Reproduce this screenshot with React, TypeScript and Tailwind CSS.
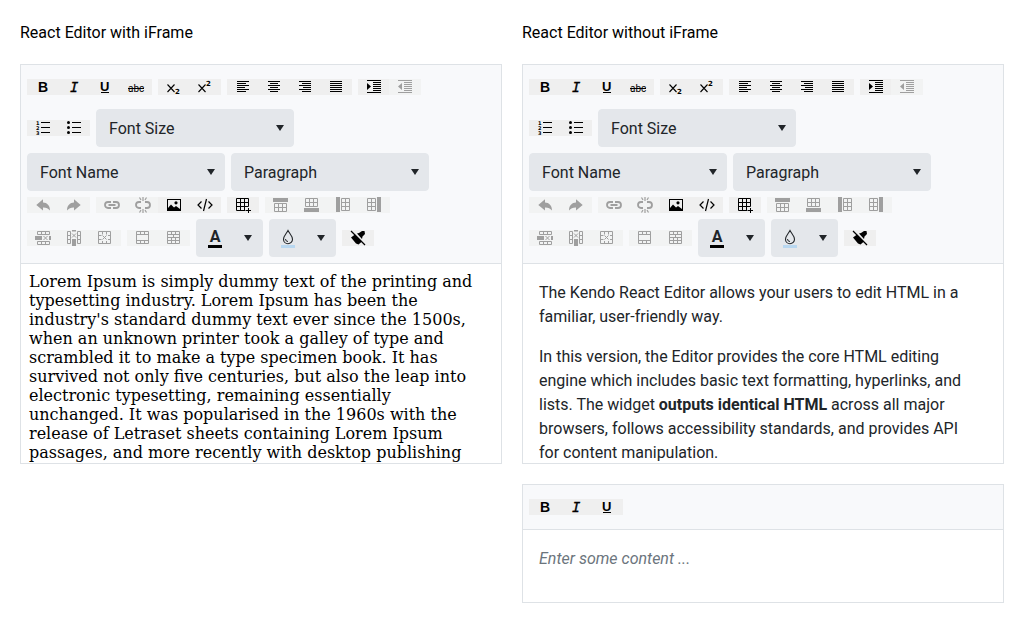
import React from "react";

type IconName =
  | "bold" | "italic" | "underline" | "strike" | "sub" | "sup"
  | "left" | "center" | "right" | "justify" | "indent" | "outdent"
  | "ordered" | "bullets" | "undo" | "redo" | "link" | "unlink" | "image" | "code"
  | "table" | "rowAbove" | "rowBelow" | "colLeft" | "colRight"
  | "deleteRow" | "deleteCol" | "deleteTable" | "merge" | "split" | "clean" | "drop";

type Tool = { icon: IconName; label: string; disabled?: boolean };

const strokes = "fill-none stroke-current";

const shapes: Record<IconName, React.ReactNode> = {
  bold: <text x="3" y="13" className="font-['Liberation_Sans',sans-serif] text-[14px] font-bold">B</text>,
  italic: <text x="4" y="13" className="font-['DejaVu_Sans_Mono',monospace] text-[14px] italic stroke-current" strokeWidth="0.3">I</text>,
  underline: (
    <>
      <text x="3" y="12" className="font-['Liberation_Sans',sans-serif] text-[13px] font-bold">U</text>
      <path d="M4 13h8v1H4z" />
    </>
  ),
  strike: (
    <>
      <text x="0" y="13" className="font-['Roboto',sans-serif] text-[10px]">abc</text>
      <path d="M0 9h16v1H0z" />
    </>
  ),
  sub: (
    <>
      <path d="M1.500 5.500l7 7.500M8.500 5.500l-7 7.500" className={strokes} strokeWidth="1.100" />
      <text x="9" y="15" className="font-['DejaVu_Sans',sans-serif] text-[7px] font-bold">2</text>
    </>
  ),
  sup: (
    <>
      <path d="M1.500 5.500l7 7.500M8.500 5.500l-7 7.500" className={strokes} strokeWidth="1.100" />
      <text x="9" y="7" className="font-['DejaVu_Sans',sans-serif] text-[7px] font-bold">2</text>
    </>
  ),
  left: <path d="M2 2h12v1H2zM2 4h9v1H2zM2 6h12v1H2zM2 8h8v1H2zM2 10h12v1H2zM2 12h9v1H2z" />,
  center: <path d="M2 2h12v1H2zM4 4h8v1H4zM2 6h12v1H2zM4 8h8v1H4zM2 10h12v1H2zM4 12h8v1H4z" />,
  right: <path d="M2 2h12v1H2zM5 4h9v1H5zM2 6h12v1H2zM6 8h8v1H6zM2 10h12v1H2zM5 12h9v1H5z" />,
  justify: <path d="M2 2h12v1H2zM2 4h12v1H2zM2 6h12v1H2zM2 8h12v1H2zM2 10h12v1H2zM2 12h12v1H2z" />,
  indent: <path d="M1 1h14v1H1zM7 3h8v1H7zM7 5h8v1H7zM7 7h8v1H7zM7 9h8v1H7zM7 11h8v1H7zM1 13h14v1H1zM1 4l4 3.500-4 3.500z" />,
  outdent: <path d="M1 1h14v1H1zM7 3h8v1H7zM7 5h8v1H7zM7 7h8v1H7zM7 9h8v1H7zM7 11h8v1H7zM1 13h14v1H1zM5 4L1 7.500 5 11z" />,
  ordered: (
    <>
      <path d="M6 2h9v1H6zM6 7h9v1H6zM6 12h9v1H6z" />
      <g className="font-['DejaVu_Sans',sans-serif] text-[5px] font-bold">
        <text x="1" y="5">1</text>
        <text x="1" y="10">2</text>
        <text x="1" y="15">3</text>
      </g>
    </>
  ),
  bullets: (
    <>
      <path d="M6 2h9v1H6zM6 7h9v1H6zM6 12h9v1H6z" />
      <circle cx="2.500" cy="2.500" r="1.500" />
      <circle cx="2.500" cy="7.500" r="1.500" />
      <circle cx="2.500" cy="12.500" r="1.500" />
    </>
  ),
  undo: <path d="M1.300 8L8 2.300V5.600C12 5.800 15 8.500 15 13.500C13.200 11.200 11 10.300 8 10.400V13.600z" />,
  redo: <path d="M14.700 8L8 2.300V5.600C4 5.800 1 8.500 1 13.500C2.800 11.200 5 10.300 8 10.400V13.600z" />,
  link: (
    <path d="M7 11H4a3 3 0 0 1 0-6h3M9 5h3a3 3 0 0 1 0 6H9M4.500 8h7" className={strokes} strokeWidth="1.800" />
  ),
  unlink: (
    <>
      <path d="M6 11H4a3 3 0 0 1 0-6h2M10 5h2a3 3 0 0 1 0 6h-2" className={strokes} strokeWidth="1.800" />
      <path d="M8 0v4M8 12v4M4.500 .5L6 3M11.500 .5L10 3M4.500 15.500L6 13M11.500 15.500L10 13" className={strokes} strokeWidth="1.200" />
    </>
  ),
  image: (
    <path fillRule="evenodd" d="M1 2h14v12H1zM2 3v8l3-3.500 3 3L10 9l4 3V3zM10 4.200a1.600 1.600 0 1 1 0 3.200a1.600 1.600 0 0 1 0-3.200z" />
  ),
  code: <path d="M4.500 4.500L1 8l3.500 3.500M11.500 4.500L15 8l-3.500 3.500M9.500 2l-3 12" className={strokes} strokeWidth="1.200" />,
  table: (
    <path d="M1.500 1.500h12v8M1.500 1.500v12h9M1.500 5.500h12M1.500 9.500h12M5.500 1.500v12M9.500 1.500v12M13.500 11v5M11 13.500h5" className={strokes} />
  ),
  rowAbove: (
    <>
      <path d="M0 1h15v4H0z" />
      <path d="M1.500 6.500h12v8h-12zM1.500 10.500h12M5.500 6.500v8M9.500 6.500v8" className={strokes} />
    </>
  ),
  rowBelow: (
    <>
      <path d="M0 11h15v4H0z" />
      <path d="M1.500 1.500h12v8h-12zM1.500 5.500h12M5.500 1.500v8M9.500 1.500v8" className={strokes} />
    </>
  ),
  colLeft: (
    <>
      <path d="M1 0h4v15H1z" />
      <path d="M6.500 1.500h8v12h-8zM10.500 1.500v12M6.500 5.500h8M6.500 9.500h8" className={strokes} />
    </>
  ),
  colRight: (
    <>
      <path d="M11 0h4v15h-4z" />
      <path d="M1.500 1.500h8v12h-8zM5.500 1.500v12M1.500 5.500h8M1.500 9.500h8" className={strokes} />
    </>
  ),
  deleteRow: (
    <>
      <path d="M0 6h7v4H0zM14 6h2v4h-2z" />
      <path d="M2.500 1.500h12v3h-12zM6.500 1.500v3M10.500 1.500v3M2.500 11.500h12v3h-12zM6.500 11.500v3M10.500 11.500v3M8.500 6l4 4M12.500 6l-4 4" className={strokes} />
    </>
  ),
  deleteCol: (
    <>
      <path d="M6 0h4v1.500H6zM6 9h4v7H6z" />
      <path d="M1.500 1.500h3v12h-3zM1.500 5.500h3M1.500 9.500h3M11.500 1.500h3v12h-3zM11.500 5.500h3M11.500 9.500h3M6 3.500l4 4M10 3.500l-4 4" className={strokes} />
    </>
  ),
  deleteTable: (
    <path d="M1.500 1.500h12v12h-12zM5.500 1.500v3M9.500 1.500v3M5.500 11v3M9.500 11v3M1.500 5.500h3M1.500 9.500h3M11 5.500h3M11 9.500h3M5.500 5.500l4 4M9.500 5.500l-4 4" className={strokes} />
  ),
  merge: (
    <path d="M1.500 1.500h12v12h-12zM1.500 4.500h12M1.500 10.500h12M5.500 1.500v3M9.500 1.500v3M5.500 10.500v3M9.500 10.500v3" className={strokes} />
  ),
  split: (
    <path d="M1.500 1.500h12v12h-12zM1.500 4.500h12M1.500 7.500h12M1.500 10.500h12M5.500 1.500v3M9.500 1.500v3M7.500 4.500v3M5.500 7.500v6M9.500 7.500v6" className={strokes} />
  ),
  clean: (
    <>
      <path d="M1 7.500L5 4.500 12 11.500 8.500 14.500 6 13.500z" />
      <path d="M7 3.500L9 3 12 1l2.500 0 .5 3-2.500 2.500L12 9z" />
      <path d="M3 1.500l12 12" className="fill-none stroke-[#efefef]" strokeWidth="0.700" />
      <path d="M1 1l14 14" className={strokes} strokeWidth="1.300" />
    </>
  ),
  drop: (
    <>
      <path d="M8 1.500C6.500 4.500 3.500 7 3.500 10.200a4.500 4.500 0 0 0 9 0C12.500 7 9.500 4.500 8 1.500z" className={strokes} strokeWidth="1.100" />
      <path d="M5.500 10a2.500 2.500 0 0 0 2.500 2.500" className={strokes} />
    </>
  ),
};

function Icon({ name }: { name: IconName }) {
  return (
    <svg viewBox="0 0 16 16" className="block size-4 shrink-0 overflow-visible fill-current" aria-hidden="true">
      {shapes[name]}
    </svg>
  );
}

function Caret() {
  return (
    <svg viewBox="0 0 8 6" className="block h-1.5 w-2 fill-current" aria-hidden="true">
      <path d="M0 0h8L4 6z" />
    </svg>
  );
}

function Group({ tools }: { tools: Tool[] }) {
  return (
    <div className="flex pl-px" role="group">
      {tools.map((t) => (
        <button
          key={t.icon}
          type="button"
          aria-label={t.label}
          disabled={t.disabled}
          className="-ml-px flex h-4 w-8 items-center justify-center bg-[#efefef] text-black disabled:bg-[#f2f3f3] disabled:text-[#9f9f9f]"
        >
          <Icon name={t.icon} />
        </button>
      ))}
    </div>
  );
}

function DropDown({ label }: { label: string }) {
  return (
    <div className="relative w-[198px]">
      <select
        aria-label={label}
        className="block h-[38px] w-full appearance-none rounded border border-[#e4e7eb] bg-[#e4e7eb] px-3 pt-0.5 text-base text-[#212529]"
      >
        <option>{label}</option>
      </select>
      <span className="pointer-events-none absolute inset-y-0 right-2.5 flex items-center text-[#212529]">
        <Caret />
      </span>
    </div>
  );
}

function ColorButton({ label, bar, children }: { label: string; bar: string; children: React.ReactNode }) {
  return (
    <button
      type="button"
      aria-label={label}
      className="flex h-[38px] w-[67px] items-center justify-between rounded bg-[#e4e7eb] pr-[11px] pl-3 text-[#212529]"
    >
      <span className="flex w-3.5 flex-col items-center">
        <span className="flex h-4 items-center">{children}</span>
        <span className={`h-[3px] w-full ${bar}`} />
      </span>
      <Caret />
    </button>
  );
}

const basic: Tool[] = [
  { icon: "bold", label: "Bold" },
  { icon: "italic", label: "Italic" },
  { icon: "underline", label: "Underline" },
];

function Row({ children, tall }: { children: React.ReactNode; tall?: boolean }) {
  return <div className={`flex items-center gap-1.5 ${tall ? "h-8" : ""}`}>{children}</div>;
}

function Toolbar({ children }: { children: React.ReactNode }) {
  return (
    <div role="toolbar" className="flex shrink-0 flex-col gap-1.5 border-b border-[#dee2e6] bg-[#f8f9fb] p-1.5">
      {children}
    </div>
  );
}

function FullToolbar() {
  return (
    <Toolbar>
      <Row tall>
        <Group tools={[...basic, { icon: "strike", label: "Strikethrough" }]} />
        <Group tools={[{ icon: "sub", label: "Subscript" }, { icon: "sup", label: "Superscript" }]} />
        <Group
          tools={[
            { icon: "left", label: "Align left" },
            { icon: "center", label: "Align center" },
            { icon: "right", label: "Align right" },
            { icon: "justify", label: "Justify" },
          ]}
        />
        <Group tools={[{ icon: "indent", label: "Indent" }, { icon: "outdent", label: "Outdent", disabled: true }]} />
      </Row>
      <Row>
        <Group tools={[{ icon: "ordered", label: "Ordered list" }, { icon: "bullets", label: "Bulleted list" }]} />
        <DropDown label="Font Size" />
      </Row>
      <Row>
        <DropDown label="Font Name" />
        <DropDown label="Paragraph" />
      </Row>
      <Row>
        <Group tools={[{ icon: "undo", label: "Undo", disabled: true }, { icon: "redo", label: "Redo", disabled: true }]} />
        <Group
          tools={[
            { icon: "link", label: "Insert link", disabled: true },
            { icon: "unlink", label: "Remove link", disabled: true },
            { icon: "image", label: "Insert image" },
            { icon: "code", label: "View HTML" },
          ]}
        />
        <Group tools={[{ icon: "table", label: "Insert table" }]} />
        <Group
          tools={[
            { icon: "rowAbove", label: "Add row above", disabled: true },
            { icon: "rowBelow", label: "Add row below", disabled: true },
            { icon: "colLeft", label: "Add column before", disabled: true },
            { icon: "colRight", label: "Add column after", disabled: true },
          ]}
        />
      </Row>
      <Row>
        <Group
          tools={[
            { icon: "deleteRow", label: "Delete row", disabled: true },
            { icon: "deleteCol", label: "Delete column", disabled: true },
            { icon: "deleteTable", label: "Delete table", disabled: true },
          ]}
        />
        <Group tools={[{ icon: "merge", label: "Merge cells", disabled: true }, { icon: "split", label: "Split cell", disabled: true }]} />
        <ColorButton label="Text color" bar="bg-black">
          <span className="text-base leading-4 font-bold">A</span>
        </ColorButton>
        <ColorButton label="Background color" bar="bg-[#b8d7f0]">
          <Icon name="drop" />
        </ColorButton>
        <Group tools={[{ icon: "clean", label: "Clean formatting" }]} />
      </Row>
    </Toolbar>
  );
}

export default function App() {
  return (
    <main className="grid grid-cols-2 items-start gap-5 bg-white p-5 font-['Roboto',sans-serif] text-base text-[#212529]">
      <section className="flex flex-col gap-5">
        <h2 className="h-6 leading-[26px] text-black">React Editor with iFrame</h2>
        <div className="flex h-[400px] flex-col border border-[#dee2e6]">
          <FullToolbar />
          <div
            contentEditable
            suppressContentEditableWarning
            role="textbox"
            aria-label="Framed editor content"
            className="min-h-0 grow overflow-hidden p-2 pr-6 font-['DejaVu_Serif',serif] leading-[19px] text-black outline-none"
          >
            Lorem Ipsum is simply dummy text of the printing and typesetting industry. Lorem Ipsum has been the
            industry's standard dummy text ever since the 1500s, when an unknown printer took a galley of type and
            scrambled it to make a type specimen book. It has survived not only five centuries, but also the leap into
            electronic typesetting, remaining essentially unchanged. It was popularised in the 1960s with the release
            of Letraset sheets containing Lorem Ipsum passages, and more recently with desktop publishing
          </div>
        </div>
      </section>
      <section className="flex flex-col gap-5">
        <h2 className="h-6 leading-[26px] text-black">React Editor without iFrame</h2>
        <div className="flex h-[400px] flex-col border border-[#dee2e6]">
          <FullToolbar />
          <div
            contentEditable
            suppressContentEditableWarning
            role="textbox"
            aria-label="Editor content"
            className="min-h-0 grow space-y-4 overflow-hidden px-4 pt-[17px] pr-8 outline-none"
          >
            <p>The Kendo React Editor allows your users to edit HTML in a familiar, user-friendly way.</p>
            <p>
              In this version, the Editor provides the core HTML editing engine which includes basic text formatting,
              hyperlinks, and lists. The widget <strong>outputs identical HTML</strong> across all major browsers,
              follows accessibility standards, and provides API for content manipulation.
            </p>
          </div>
        </div>
        <div className="border border-[#dee2e6]">
          <Toolbar>
            <Row tall>
              <Group tools={basic} />
            </Row>
          </Toolbar>
          <textarea
            aria-label="Short editor content"
            placeholder="Enter some content ..."
            className="block h-[72px] w-full resize-none px-4 pt-[17px] outline-none placeholder:text-[#6c757d] placeholder:italic"
          />
        </div>
      </section>
    </main>
  );
}
